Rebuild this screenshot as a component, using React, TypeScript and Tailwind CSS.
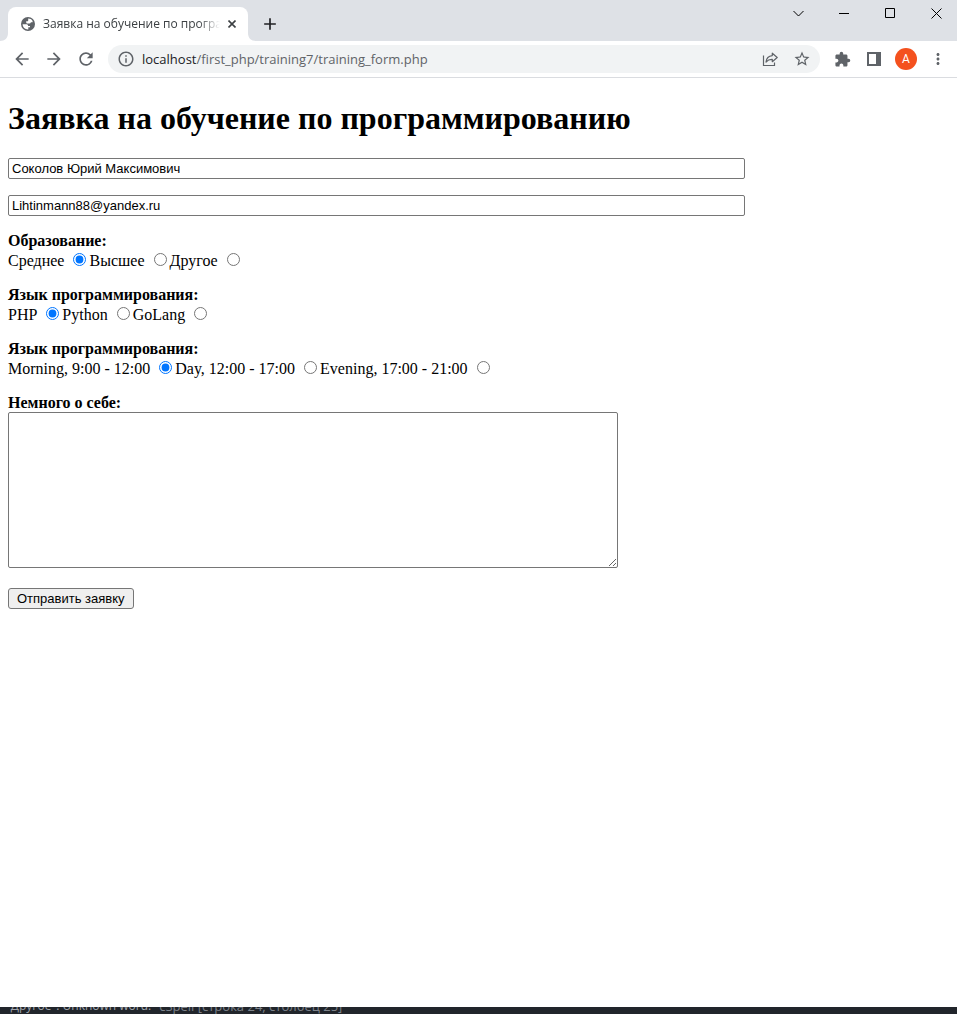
import React, { useId, useState } from "react";
import {
  MdAdd,
  MdArrowBack,
  MdArrowForward,
  MdExtension,
  MdInfoOutline,
  MdMoreVert,
  MdRefresh,
  MdStarBorder,
} from "react-icons/md";

function GlobeIcon() {
  return (
    <svg viewBox="0 0 14 14" className="size-[14px] shrink-0" aria-hidden="true">
      <circle cx="7" cy="7" r="7" fill="#5f6368" />
      <path
        d="M1.6 7.2H5.2c1.3 0 1.9.7 1.9 1.7H9v1.3H7.3v2.2C4.200 12.600 1.700 10.200 1.600 7.200Z"
        fill="#fff"
      />
      <path
        d="M7.200 1.600C9 1.600 10.600 2.400 11.600 3.900V5.200H9.800C9.700 6.200 9 6.500 7.900 6.500H6.600C5.700 6.500 5.200 6 5.200 5.200V4.300H6.400c.7 0 .8-.5.8-1.100Z"
        fill="#fff"
      />
    </svg>
  );
}

function ShareIcon() {
  return (
    <svg viewBox="0 0 16 16" className="size-4" fill="none" stroke="#5f6368" aria-hidden="true">
      <path d="M1.500 4.500V14.500H12.500V11.500" strokeWidth="1.200" />
      <path
        d="M10.300 2.200 15.200 6.500 10.300 10.700V8.300C7.500 8.200 5.700 9 4 11 4.400 7.400 6.600 5 10.300 4.600Z"
        strokeWidth="1.200"
        strokeLinejoin="round"
      />
    </svg>
  );
}

function PanelIcon() {
  return (
    <svg viewBox="0 0 14 14" className="size-[14px]" aria-hidden="true">
      <path d="M0 0H14V14H0ZM2 2V12H9V2Z" fill="#5f6368" fillRule="evenodd" />
    </svg>
  );
}

function CloseIcon() {
  return (
    <svg viewBox="0 0 8 8" className="size-2" fill="none" stroke="#3c4043" strokeWidth="1.600" aria-hidden="true">
      <path d="M0.500 0.500 7.500 7.500M7.500 0.500 0.500 7.500" />
    </svg>
  );
}

function WindowButton({ label, path }: { label: string; path: string }) {
  return (
    <button type="button" aria-label={label} className="flex h-[26px] w-[46px] items-center justify-center pl-[5px]">
      <svg viewBox="0 0 11 11" className="size-[11px]" fill="none" stroke="#000" aria-hidden="true">
        <path d={path} />
      </svg>
    </button>
  );
}

function IconButton({ label, children }: { label: string; children: React.ReactNode }) {
  return (
    <button type="button" aria-label={label} className="flex size-8 shrink-0 items-center justify-center text-lg text-[#5f6368]">
      {children}
    </button>
  );
}

function TabStrip() {
  return (
    <div className="flex h-[41px] items-end bg-[#dee1e6] pl-2">
      <div className="relative flex h-[34px] w-60 items-center rounded-t-lg bg-white pr-2 pl-[13px]">
        <svg viewBox="0 0 8 8" className="absolute bottom-0 -left-2 size-2" aria-hidden="true">
          <path d="M8 0V8H0C5 8 8 5 8 0Z" fill="#fff" />
        </svg>
        <svg viewBox="0 0 8 8" className="absolute -right-2 bottom-0 size-2" aria-hidden="true">
          <path d="M0 0V8H8C3 8 0 5 0 0Z" fill="#fff" />
        </svg>
        <GlobeIcon />
        <span className="mr-1 ml-2 flex-1 overflow-hidden mask-r-from-88% font-['Open_Sans',sans-serif] text-xs whitespace-nowrap text-[#3c4043]">
          Заявка на обучение по программированию
        </span>
        <button type="button" aria-label="Закрыть вкладку" className="flex size-4 shrink-0 items-center justify-center">
          <CloseIcon />
        </button>
      </div>
      <button type="button" aria-label="Новая вкладка" className="ml-2 flex h-[34px] w-7 items-center justify-center text-xl text-[#202124]">
        <MdAdd />
      </button>
      <div className="ml-auto flex self-start">
        <WindowButton label="Поиск вкладок" path="M0.500 3 5.500 8 10.500 3" />
        <WindowButton label="Свернуть" path="M0 5.500H10" />
        <WindowButton label="Развернуть" path="M0.500 0.500H9.500V9.500H0.500Z" />
        <WindowButton label="Закрыть" path="M0.500 0.500 10.500 10.500M10.500 0.500 0.500 10.500" />
      </div>
    </div>
  );
}

function Toolbar() {
  return (
    <div className="flex h-[37px] items-center border-b border-[#dadce0] bg-white pr-[3px] pl-[6px]">
      <IconButton label="Назад"><MdArrowBack size={20} /></IconButton>
      <IconButton label="Вперёд"><MdArrowForward size={20} /></IconButton>
      <IconButton label="Обновить"><MdRefresh size={20} /></IconButton>
      <div className="ml-[6px] flex h-7 flex-1 items-center rounded-full bg-[#f1f3f4] pr-[2px] pl-[9px]">
        <MdInfoOutline size={18} className="shrink-0 text-[#5f6368]" />
        <span className="ml-[7px] flex-1 truncate font-['Open_Sans',sans-serif] text-[13px] leading-5 text-[#5f6368]">
          <span className="text-[#202124]">localhost</span>/first_php/training7/training_form.php
        </span>
        <IconButton label="Поделиться"><ShareIcon /></IconButton>
        <IconButton label="Добавить в закладки"><MdStarBorder size={18} /></IconButton>
      </div>
      <div className="ml-[6px] flex">
        <IconButton label="Расширения"><MdExtension size={17} /></IconButton>
        <IconButton label="Боковая панель"><PanelIcon /></IconButton>
        <IconButton label="Профиль">
          <span className="flex size-[22px] items-center justify-center rounded-full bg-[#f4511e] font-[Roboto,sans-serif] text-xs text-white">
            A
          </span>
        </IconButton>
        <IconButton label="Меню"><MdMoreVert size={18} /></IconButton>
      </div>
    </div>
  );
}

function RadioGroup({ title, name, options }: { title: string; name: string; options: string[] }) {
  const id = useId();
  const [value, setValue] = useState(options[0]);
  return (
    <fieldset className="mb-[14px]">
      <legend className="leading-[18px] font-bold">{title}</legend>
      <div className="flex flex-wrap leading-[22px]">
        {options.map((option, index) => (
          <React.Fragment key={option}>
            <label htmlFor={`${id}-${index}`}>{option}</label>
            <input
              id={`${id}-${index}`}
              type="radio"
              name={name}
              checked={value === option}
              onChange={() => setValue(option)}
              className="mt-[3px] mr-[3px] ml-[9px] size-[13px]"
            />
          </React.Fragment>
        ))}
      </div>
    </fieldset>
  );
}

const fieldClass =
  "block h-[21px] w-[737px] max-w-full rounded-xs border border-[#767676] bg-white px-[3px] font-['Liberation_Sans',Arial,sans-serif] text-[13px]";

export default function App() {
  return (
    <div className="flex min-h-screen flex-col bg-white">
      <header>
        <TabStrip />
        <Toolbar />
      </header>
      <main className="flex-1 px-2 pt-[22px] font-['Liberation_Serif','Times_New_Roman',serif] text-base text-black">
        <h1 className="mb-[21px] text-[32px] leading-[37px] font-bold">Заявка на обучение по программированию</h1>
        <form onSubmit={(event) => event.preventDefault()}>
          <input type="text" name="name" aria-label="Имя" defaultValue="Соколов Юрий Максимович" className={`${fieldClass} mb-4`} />
          <input type="email" name="email" aria-label="Email" defaultValue="Lihtinmann88@yandex.ru" className={`${fieldClass} mb-4`} />
          <RadioGroup title="Образование:" name="education" options={["Среднее", "Высшее", "Другое"]} />
          <RadioGroup title="Язык программирования:" name="language" options={["PHP", "Python", "GoLang"]} />
          <RadioGroup
            title="Язык программирования:"
            name="time"
            options={["Morning, 9:00 - 12:00", "Day, 12:00 - 17:00", "Evening, 17:00 - 21:00"]}
          />
          <label htmlFor="about" className="block leading-[18px] font-bold">Немного о себе:</label>
          <textarea
            id="about"
            name="about"
            className="mb-5 block h-[156px] w-[610px] max-w-full resize rounded-xs border border-[#767676] bg-white p-[2px] font-['Liberation_Mono',monospace] text-[13px]"
          />
          <button
            type="submit"
            className="block h-[21px] rounded-[3px] border border-[#767676] bg-[#efefef] px-2 font-['Liberation_Sans',Arial,sans-serif] text-[13px] leading-[19px]"
          >
            Отправить заявку
          </button>
        </form>
      </main>
      <footer className="flex h-[7px] items-end overflow-hidden bg-[#21252b] px-[6px] font-['Open_Sans',sans-serif] text-xs leading-4 whitespace-nowrap text-[#a0a4ab]">
        <span>"Другое": Unknown word.</span>
        <span className="ml-2 text-[13px] text-[#7d828a]">cSpell [строка 24, столбец 25]</span>
      </footer>
    </div>
  );
}
